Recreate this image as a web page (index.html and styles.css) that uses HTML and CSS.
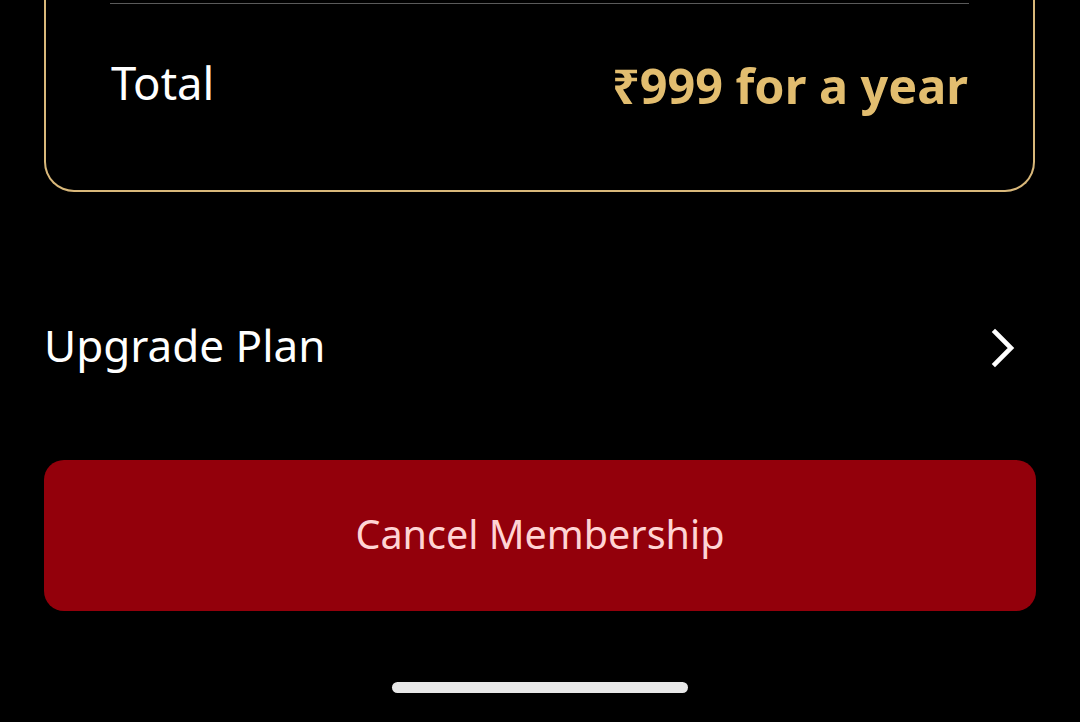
FILE: index.html
```html
<!DOCTYPE html>
<html lang="en">
<head>
<meta charset="utf-8">
<title>Membership</title>
<link rel="stylesheet" href="styles.css">
</head>
<body>
<main class="screen">
  <section class="summary-card">
    <div class="divider"></div>
    <div class="total-row">
      <span class="total-label">Total</span>
      <span class="total-price">₹999 for a year</span>
    </div>
  </section>

  <a class="upgrade-row" href="#">
    <span class="upgrade-label">Upgrade Plan</span>
    <svg class="chevron" width="26" height="40" viewBox="0 0 26 40" aria-hidden="true">
      <path d="M4 4 L20 20 L4 36" fill="none" stroke="#fff" stroke-width="4.6" stroke-linecap="square" stroke-linejoin="miter"/>
    </svg>
  </a>

  <button class="cancel-btn" type="button">Cancel Membership</button>

  <div class="home-indicator"></div>
</main>
</body>
</html>
```

FILE: styles.css
```css
html, body {
  margin: 0;
  padding: 0;
  background: #000;
}

body {
  width: 1080px;
  height: 722px;
  overflow: hidden;
  font-family: "Noto Sans", "Open Sans", sans-serif;
  color: #fff;
}

.screen {
  display: flex;
  flex-direction: column;
  padding: 0 44px 0 44px;
}

.summary-card {
  border: 2px solid #d9b87a;
  border-top: none;
  border-radius: 0 0 30px 30px;
  padding: 3px 64px 75px 64px;
  margin-right: 1px;
}

.divider {
  height: 1px;
  background: #5a5a5a;
}

.total-row {
  display: flex;
  justify-content: space-between;
  align-items: flex-start;
  margin-top: 48px;
}

.total-label {
  font-size: 45.5px;
  line-height: 60px;
  font-weight: 400;
  color: #fff;
  margin-left: 1px;
}

.total-price {
  font-size: 48.5px;
  line-height: 60px;
  font-weight: 700;
  color: #e2bd6f;
  padding-top: 3px;
  margin-right: 1px;
}

.upgrade-row {
  display: flex;
  justify-content: space-between;
  align-items: center;
  margin-top: 123px;
  padding-right: 19px;
  text-decoration: none;
  color: #fff;
}

.upgrade-label {
  font-size: 44px;
  line-height: 60px;
  font-weight: 400;
}

.chevron {
  display: block;
  margin-top: 6px;
}

.cancel-btn {
  margin-top: 85px;
  height: 151px;
  border: none;
  border-radius: 20px;
  background: #93000b;
  color: #ffd4d4;
  font-family: "Noto Sans", "Open Sans", sans-serif;
  font-size: 39.5px;
  font-weight: 400;
  display: flex;
  align-items: center;
  justify-content: center;
  padding: 0 0 4px 0;
}

.home-indicator {
  align-self: center;
  width: 296px;
  height: 11px;
  border-radius: 6px;
  background: #e8e8e8;
  margin-top: 71px;
}
```
